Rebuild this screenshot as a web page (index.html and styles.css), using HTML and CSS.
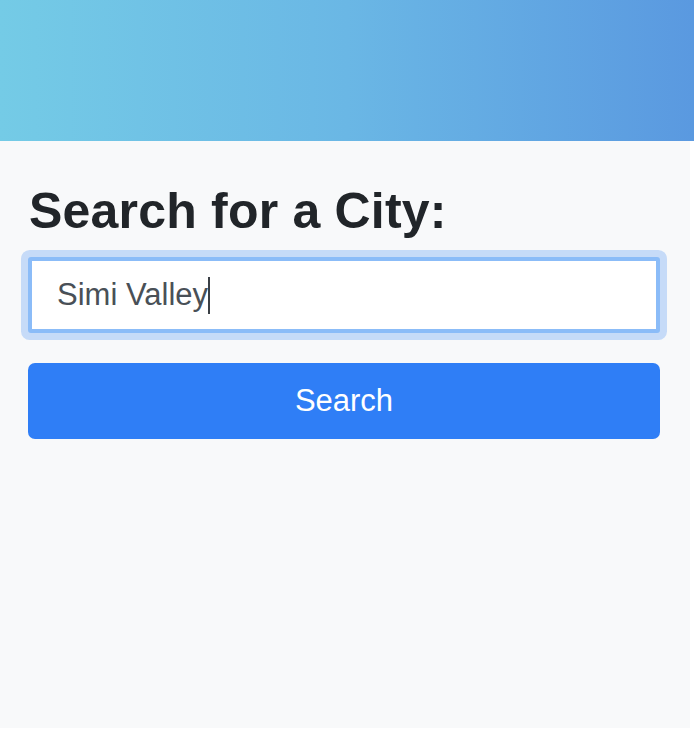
FILE: index.html
```html
<!DOCTYPE html>
<html lang="en">
<head>
<meta charset="utf-8">
<title>Weather Search</title>
<link rel="stylesheet" href="styles.css">
</head>
<body>
<header class="hero"></header>
<main class="page">
  <form class="search" onsubmit="return false">
    <h2 class="title">Search for a City:</h2>
    <div class="field" role="textbox" aria-label="City">
      <span class="value">Simi Valley</span><span class="caret"></span>
    </div>
    <button class="btn" type="submit">Search</button>
  </form>
</main>
</body>
</html>
```

FILE: styles.css
```css
html, body {
  margin: 0;
  padding: 0;
  background: #ffffff;
}

body {
  width: 694px;
  height: 730px;
  overflow: hidden;
  font-family: "Liberation Sans", Arial, sans-serif;
}

.hero {
  height: 141px;
  background: linear-gradient(to right, #74cbe6 0%, #6ab7e5 50%, #5a99e0 100%);
}

.page {
  width: 690px;
  height: 587px;
  background: #f8f9fa;
  box-sizing: border-box;
  padding: 40px 30px 0 28px;
}

.search {
  display: flex;
  flex-direction: column;
}

.title {
  margin: 0 0 16px 1px;
  font-size: 50px;
  line-height: 60px;
  font-weight: 700;
  color: #212529;
  letter-spacing: 0.2px;
}

.field {
  height: 76px;
  box-sizing: border-box;
  border: 4px solid #8bbcf8;
  border-radius: 3px;
  box-shadow: 0 0 0 7px #c6dbf8;
  background: #ffffff;
  display: flex;
  align-items: center;
  padding-left: 25px;
  font-size: 31px;
  color: #495057;
}

.caret {
  display: inline-block;
  width: 1.5px;
  height: 37px;
  background: #3a3f45;
  margin-left: 0;
}

.btn {
  margin-top: 30px;
  height: 76px;
  border: none;
  border-radius: 7px;
  background: #2f7ef6;
  color: #ffffff;
  font-family: "Liberation Sans", Arial, sans-serif;
  font-size: 31px;
  padding: 0;
  cursor: pointer;
}
```
